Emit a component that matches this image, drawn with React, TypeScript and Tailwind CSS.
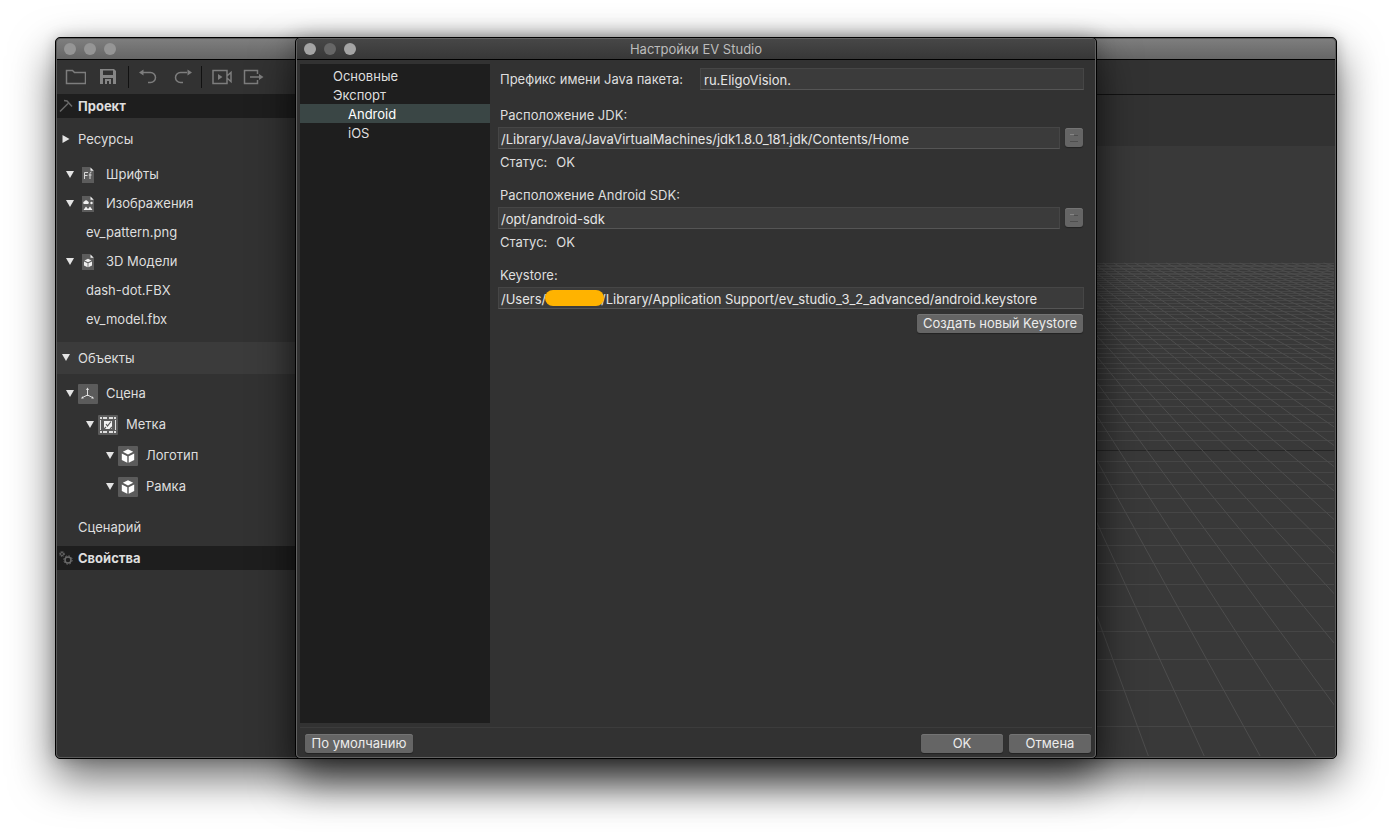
import React from "react";
import clsx from "clsx";

interface TreeRowProps {
  label: string;
  icon?: React.ReactNode;
  className?: string;
}

const Arrow: React.FC<{ open?: boolean }> = ({ open = true }) => (
  <svg width="8" height="8" viewBox="0 0 8 8" className="shrink-0 fill-[#e4e4e4]">
    {open ? <path d="M0 0h8L4 7z" /> : <path d="M0.5 0v8l7-4z" />}
  </svg>
);

const TreeRow: React.FC<TreeRowProps> = ({ label, icon, className }) => (
  <li>
    <button type="button" className={clsx("flex w-full items-center", className)}>
      <Arrow />
      {icon && <span className="ml-1 flex w-5 shrink-0 justify-center">{icon}</span>}
      <span className="ml-2">{label}</span>
    </button>
  </li>
);

const FileIcon: React.FC<{ children: React.ReactNode }> = ({ children }) => (
  <svg width="12" height="16" viewBox="0 0 12 16">
    <path d="M0 0h8l4 4v12H0z" fill="#5c5c5c" />
    <path d="M8.500 0.500v3.200h3.200z" fill="#f0f0f0" />
    {children}
  </svg>
);

const FontIcon = () => (
  <FileIcon>
    <path d="M2.500 12V5.500h3.500M2.500 8.500h3M8 12V6.500q0-1.500 1.500-1.500M6.800 8h2.700" fill="none" stroke="#d8d8d8" />
  </FileIcon>
);

const ImageIcon = () => (
  <FileIcon>
    <path d="M2 8a1.500 1.500 0 0 1 0.500-2.800 1.800 1.800 0 0 1 3.200 0A1.500 1.500 0 0 1 6 8z" fill="#f0f0f0" />
    <circle cx="9.500" cy="7" r="1.200" fill="#f0f0f0" />
    <path d="M1.500 14l2.500-3.500L6 13l2-2.500 2.500 3.500z" fill="#f0f0f0" />
  </FileIcon>
);

const ModelIcon = () => (
  <FileIcon>
    <path d="M6 4.800l3.500 1.700L6 8.200 2.500 6.500z" fill="#f0f0f0" />
    <path d="M2 7.400l3.600 1.800v4L2 11.400zM10 7.400L6.400 9.200v4l3.600-1.800z" fill="#f0f0f0" />
  </FileIcon>
);

const SceneIcon = () => (
  <svg width="20" height="20" viewBox="0 0 20 20">
    <rect width="20" height="20" rx="1" fill="#5b5b5b" />
    <path d="M9.500 5v7M9.500 11L4.500 13.500M9.500 11l5 2.500" fill="none" stroke="#e0e0e0" />
    <path d="M9.500 3.500l1.500 2.500H8zM3 14.500l1.500-2.300 1.200 2.300zM16 14.500l-1.500-2.300-1.200 2.300z" fill="#e8e8e8" />
  </svg>
);

const MarkerIcon = () => (
  <svg width="20" height="20" viewBox="0 0 20 20">
    <rect width="20" height="20" rx="1" fill="#5b5b5b" />
    <path
      d="M2 2h2v2H2zM16 2h2v2h-2zM2 16h2v2H2zM16 16h2v2h-2zM5 2h4v2H5zM11 2h4v2h-4zM5 16h4v2H5zM11 16h4v2h-4zM2 5h1v10H2zM17 5h1v10h-1z"
      fill="#dedede"
    />
    <path d="M6 6h8v8H6z" fill="#f4f4f4" />
    <path d="M8 9l1.500 2L13 6.500M6 14l2-2M14 12l-2 2" stroke="#5b5b5b" strokeWidth="1.200" fill="none" />
  </svg>
);

const CubeIcon = () => (
  <svg width="20" height="20" viewBox="0 0 20 20">
    <rect width="20" height="20" rx="1" fill="#5b5b5b" />
    <path d="M10 3.200l5.200 2.600L10 8.600 4.800 5.800z" fill="#fff" />
    <path d="M3.800 7.400l5.500 2.900v6.500l-5.500-2.900zM16.200 7.400l-5.500 2.900v6.500l5.500-2.900z" fill="#fff" />
  </svg>
);

const ToolButton: React.FC<{ label: string; className?: string; children: React.ReactNode }> = ({ label, className, children }) => (
  <button type="button" aria-label={label} className={className}>
    <svg width="21" height="16" viewBox="0 0 21 16" fill="none" stroke="#7d7d7d" strokeWidth="1.500">
      {children}
    </svg>
  </button>
);

const Toolbar = () => (
  <div className="flex h-[35px] shrink-0 items-center border-b border-[#121212] pl-2">
    <ToolButton label="Открыть">
      <path d="M1.500 14.500V1.500h6l2 2h11v11z" />
    </ToolButton>
    <ToolButton label="Сохранить" className="ml-3">
      <path d="M2 0h14l2 2v13h-3V9H5v6H2zM5 1.500V6h10V1.500zM7 10h6v5H7zM9 12v3h2v-3z" fill="#858585" fillRule="evenodd" stroke="none" />
    </ToolButton>
    <span className="ml-[9px] h-[22px] w-px bg-[#111]" />
    <ToolButton label="Отменить" className="ml-2">
      <path d="M6 3.500h7.500a5 5 0 0 1 0 10H11" />
      <path d="M2 3.500l4.500-3v6z" fill="#7d7d7d" stroke="none" />
    </ToolButton>
    <ToolButton label="Повторить" className="ml-[15px]">
      <path d="M14 3.500H7.500a5 5 0 0 0 0 10H10" />
      <path d="M19 3.500l-4.500-3v6z" fill="#7d7d7d" stroke="none" />
    </ToolButton>
    <span className="ml-[7px] h-[22px] w-px bg-[#111]" />
    <ToolButton label="Просмотр" className="ml-[9px]">
      <path d="M2 1.500h14v13H2zM16.500 6.500l3.500-3v9l-3.500-3" />
      <path d="M7 5v6l4.500-3z" fill="#7d7d7d" stroke="none" />
    </ToolButton>
    <ToolButton label="Экспорт" className="ml-[11px]">
      <path d="M14.500 5V1.500h-13v13h13V11M7 8h9" />
      <path d="M20.500 8L16 5v6z" fill="#7d7d7d" stroke="none" />
    </ToolButton>
  </div>
);

const Sidebar = () => (
  <aside className="w-[240px] shrink-0 text-[#dedede]">
    <h2 className="relative z-10 -mt-px flex h-6 items-center bg-[#1e1e1e] pl-[2px] font-bold">
      <svg width="14" height="14" viewBox="0 0 14 14" fill="none" stroke="#6a6a6a" strokeWidth="1.500">
        <path d="M1 12.500L9 4.500M5 1.500l3 0.500 5 5.500" />
      </svg>
      <span className="ml-[5px]">Проект</span>
    </h2>
    <button type="button" className="mt-[5px] flex h-8 w-full items-center pl-[5px]">
      <Arrow open={false} />
      <span className="ml-2">Ресурсы</span>
    </button>
    <ul className="mt-[5px]">
      <TreeRow label="Шрифты" icon={<FontIcon />} className="h-[29px] pl-[9px]" />
      <TreeRow label="Изображения" icon={<ImageIcon />} className="h-[29px] pl-[9px]" />
      <li className="flex h-[29px] items-center pl-[29px]">ev_pattern.png</li>
      <TreeRow label="3D Модели" icon={<ModelIcon />} className="h-[29px] pl-[9px]" />
      <li className="flex h-[29px] items-center pl-[29px]">dash-dot.FBX</li>
      <li className="flex h-[29px] items-center pl-[29px]">ev_model.fbx</li>
    </ul>
    <ul className="mt-2">
      <TreeRow label="Объекты" className="mb-1 h-8 bg-[#3b3b3b] pl-[5px]" />
      <TreeRow label="Сцена" icon={<SceneIcon />} className="h-[31px] pl-[9px]" />
      <TreeRow label="Метка" icon={<MarkerIcon />} className="h-[31px] pl-[29px]" />
      <TreeRow label="Логотип" icon={<CubeIcon />} className="h-[31px] pl-[49px]" />
      <TreeRow label="Рамка" icon={<CubeIcon />} className="h-[31px] pl-[49px]" />
    </ul>
    <p className="mt-[9px] flex h-8 items-center pl-[21px]">Сценарий</p>
    <h2 className="mt-[3px] flex h-6 items-center bg-[#1e1e1e] pl-[2px] font-bold">
      <svg width="14" height="14" viewBox="0 0 14 14" fill="none" stroke="#6a6a6a">
        <circle cx="3" cy="3" r="1.500" />
        <circle cx="3" cy="3" r="2.500" strokeDasharray="1 1" />
        <circle cx="9" cy="9" r="3" strokeWidth="1.500" />
        <circle cx="9" cy="9" r="4.200" strokeDasharray="1.600 1.700" />
      </svg>
      <span className="ml-[5px]">Свойства</span>
    </h2>
  </aside>
);

const HORIZON = 3;
const VANISH_X = 628;

// floor grid: rows get denser towards the horizon, columns meet at the vanishing point
const rows = Array.from({ length: 63 }, (_, i) => {
  const n = i - 48;
  return { n, y: Math.round(HORIZON + 1 / (0.003322 - n * 0.0001134)) };
});
const columns = Array.from({ length: 70 }, (_, i) => (i - 10) * 0.092);

const Viewport = () => (
  <div className="mt-[51px] min-h-0 flex-1 bg-[#393939] pr-px pb-px">
    <svg className="block h-full w-full" fill="none">
      {rows.map(({ n, y }) => (
        <path key={n} d={`M0 ${y + 0.5}h4000`} stroke={n === 0 ? "#252525" : "#464646"} />
      ))}
      {columns.map((slope) => (
        <path key={slope} d={`M${VANISH_X + slope * 114} 117L${VANISH_X + slope * 2000} 2003`} stroke="#4d4d4d" />
      ))}
    </svg>
  </div>
);

const Light: React.FC<{ className: string }> = ({ className }) => (
  <span className={clsx("size-3 rounded-full", className)} />
);

const panes = [
  { label: "Основные", className: "pl-[33px]" },
  { label: "Экспорт", className: "pl-[33px]" },
  { label: "Android", className: "pl-12 bg-[#3a4645] text-white" },
  { label: "iOS", className: "pl-12" },
];

const field =
  "h-[22px] w-full min-w-0 border border-[#464646] border-b-[#555] bg-[#3b3b3b] px-[2px] pt-[2px] text-[#e6e6e6] outline-none";
const push = "h-[19px] rounded-[3px] bg-[#656565] text-[#ececec] shadow-[0_1px_1px_#222,inset_0_1px_0_#747474]";

interface PathFieldProps {
  id: string;
  label: string;
  value: string;
}

const PathField: React.FC<PathFieldProps> = ({ id, label, value }) => (
  <div className="mb-[13px]">
    <label htmlFor={id} className="block h-[22px] pl-[2px] leading-5">{label}</label>
    <div className="flex items-start pr-px">
      <input id={id} className={field} defaultValue={value} />
      <button type="button" aria-label="Обзор" className={clsx(push, "mt-px ml-[5px] flex w-[18px] shrink-0 items-center justify-center")}>
        <svg width="8" height="8" viewBox="0 0 8 8" stroke="#4e4e4e">
          <path d="M4 1.500h4M0 7.500h8" />
          <path d="M0 0.500h4" stroke="#858585" />
        </svg>
      </button>
    </div>
    <p className="mt-[3px] h-5 pl-[2px] leading-5">
      Статус:<span className="ml-[9px]">OK</span>
    </p>
  </div>
);

const SettingsDialog = () => (
  <section
    role="dialog"
    aria-labelledby="dialog-title"
    className="absolute -inset-y-px inset-x-[239px] z-20 flex rounded-[5px] border border-black bg-[#323232] shadow-[0_22px_44px_rgba(0,0,0,0.6),0_0_20px_rgba(0,0,0,0.2)]"
  >
    <div className="flex min-w-0 flex-1 flex-col overflow-hidden rounded-[4px] border border-[#626262] text-[#dedede]">
      <header className="grid h-[21px] shrink-0 grid-cols-[1fr_auto_1fr] items-center border-b border-black bg-linear-to-b from-[#474747] to-[#373737] px-[7px]">
        <div className="flex gap-2">
          <Light className="bg-[#a4a4a4]" />
          <Light className="bg-[#666]" />
          <Light className="bg-[#a4a4a4]" />
        </div>
        <h1 id="dialog-title" className="text-[#bcbcbc]">Настройки EV Studio</h1>
      </header>

      <div className="flex min-h-0 flex-1 py-1 pl-[3px]">
        <nav className="w-[190px] shrink-0 bg-[#1e1e1e] pt-[2px]">
          {panes.map((pane) => (
            <button key={pane.label} type="button" className={clsx("block h-[19px] w-full pt-px text-left", pane.className)}>
              {pane.label}
            </button>
          ))}
        </nav>

        <form className="min-w-0 flex-1 pt-1 pr-[11px] pl-2">
          <div className="mb-[15px] flex items-center pl-[2px]">
            <label htmlFor="prefix" className="w-[200px] shrink-0">Префикс имени Java пакета:</label>
            <input id="prefix" className={clsx(field, "indent-px")} defaultValue="ru.EligoVision." />
          </div>
          <PathField
            id="jdk"
            label="Расположение JDK:"
            value="/Library/Java/JavaVirtualMachines/jdk1.8.0_181.jdk/Contents/Home"
          />
          <PathField id="sdk" label="Расположение Android SDK:" value="/opt/android-sdk" />
          <label htmlFor="keystore" className="block h-[22px] pl-[2px] leading-5">Keystore:</label>
          <div className="relative">
            <input
              id="keystore"
              className={field}
              defaultValue={`/Users/${"\u00a0".repeat(15)}/Library/Application Support/ev_studio_3_2_advanced/android.keystore`}
            />
            <span className="absolute top-[3px] left-[47px] h-4 w-[59px] rounded-full bg-[#ffb300]" />
          </div>
          <div className="mt-[5px] flex justify-end pr-px">
            <button type="button" className={clsx(push, "w-[166px]")}>Создать новый Keystore</button>
          </div>
        </form>
      </div>

      <footer className="mx-[3px] flex shrink-0 gap-[6px] border-t border-[#3c3c3c] pt-[6px] pr-px pb-1 pl-[5px]">
        <button type="button" className={clsx(push, "mr-auto w-[108px]")}>По умолчанию</button>
        <button type="button" className={clsx(push, "w-[82px]")}>OK</button>
        <button type="button" className={clsx(push, "w-[82px]")}>Отмена</button>
      </footer>
    </div>
  </section>
);

const App: React.FC = () => (
  <main className="flex h-screen overflow-hidden bg-white px-[55px] pt-[37px] pb-[73px] font-['Inter',sans-serif] text-[13px]/[19px]">
    <div className="relative flex min-w-0 flex-1 rounded-[5px] border border-black bg-[#323232] shadow-[0_18px_44px_rgba(0,0,0,0.6),0_0_14px_rgba(0,0,0,0.2)]">
      <div className="flex min-w-0 flex-1 flex-col overflow-hidden rounded-[4px] border border-[#5a5a5a]">
        <header className="flex h-[21px] shrink-0 items-center gap-2 border-b border-black bg-linear-to-b from-[#7e7e7e] to-[#666] pl-[7px]">
          <Light className="bg-[#959595]" />
          <Light className="bg-[#959595]" />
          <Light className="bg-[#959595]" />
        </header>
        <Toolbar />
        <div className="flex min-h-0 flex-1">
          <Sidebar />
          <div className="flex min-w-0 flex-1 flex-col">
            <Viewport />
          </div>
        </div>
      </div>
      <SettingsDialog />
    </div>
  </main>
);

export default App;
